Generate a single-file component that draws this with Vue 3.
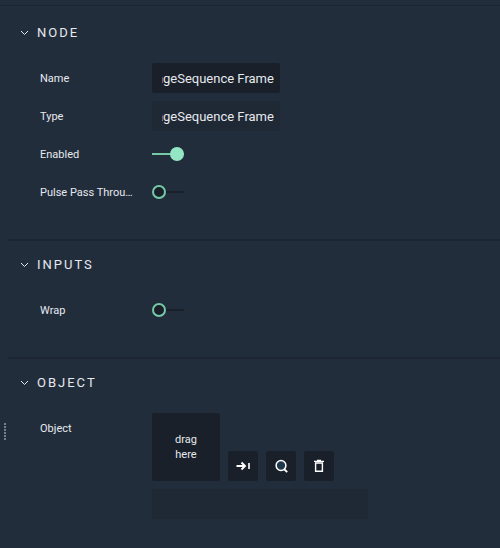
<script setup>
import { onMounted, ref } from 'vue'

const name = ref('ImageSequence Frame')
const type = ref('ImageSequence Frame')
const enabled = ref(true)
const pulse = ref(false)
const wrap = ref(false)
const objectPath = ref('')
const open = ref({ node: true, inputs: true, object: true })

const nameField = ref(null)
const typeField = ref(null)

// Long values show their end, the part that tells nodes apart.
onMounted(() => {
  for (const field of [nameField.value, typeField.value]) {
    field.scrollLeft = field.scrollWidth
  }
})
</script>

<template>
  <div class="editor">
    <div class="grip" aria-hidden="true">
      <i v-for="n in 6" :key="n"></i>
    </div>

    <main class="panel">
      <section class="group">
        <h2>
          <button class="heading" :aria-expanded="open.node" @click="open.node = !open.node">
            <svg class="chevron" viewBox="0 0 9 6"><path d="M1 1l3.5 3.5L8 1" /></svg>
            <span>NODE</span>
          </button>
        </h2>
        <div v-show="open.node" class="rows">
          <div class="row">
            <label class="label" for="name">Name</label>
            <input id="name" ref="nameField" v-model="name" class="text" type="text" />
          </div>
          <div class="row">
            <label class="label" for="type">Type</label>
            <input id="type" ref="typeField" v-model="type" class="text muted" type="text" readonly />
          </div>
          <div class="row">
            <label class="label" for="enabled">Enabled</label>
            <input id="enabled" v-model="enabled" class="switch" type="checkbox" />
          </div>
          <div class="row">
            <label class="label" for="pulse">Pulse Pass Through</label>
            <input id="pulse" v-model="pulse" class="switch" type="checkbox" />
          </div>
        </div>
      </section>

      <section class="group">
        <h2>
          <button class="heading" :aria-expanded="open.inputs" @click="open.inputs = !open.inputs">
            <svg class="chevron" viewBox="0 0 9 6"><path d="M1 1l3.5 3.5L8 1" /></svg>
            <span>INPUTS</span>
          </button>
        </h2>
        <div v-show="open.inputs" class="rows">
          <div class="row">
            <label class="label" for="wrap">Wrap</label>
            <input id="wrap" v-model="wrap" class="switch" type="checkbox" />
          </div>
        </div>
      </section>

      <section class="group">
        <h2>
          <button class="heading" :aria-expanded="open.object" @click="open.object = !open.object">
            <svg class="chevron" viewBox="0 0 9 6"><path d="M1 1l3.5 3.5L8 1" /></svg>
            <span>OBJECT</span>
          </button>
        </h2>
        <div v-show="open.object" class="rows">
          <div class="row">
            <label class="label" for="object">Object</label>
            <div class="picker">
              <div class="tools">
                <div class="drop">drag here</div>
                <button class="tool" aria-label="Go to object">
                  <svg viewBox="0 0 16 16">
                    <path d="M1.5 8h8.5M6.5 4.5L10 8l-3.5 3.5" stroke-width="1.9" />
                    <path d="M14 5v6" stroke-width="1.6" />
                  </svg>
                </button>
                <button class="tool" aria-label="Find object">
                  <svg viewBox="0 0 16 16">
                    <circle cx="8" cy="7.5" r="4.9" fill="#20384b" stroke-width="1.5" />
                    <path d="M11 11l3.2 3.2" stroke-width="1.8" />
                  </svg>
                </button>
                <button class="tool" aria-label="Remove object">
                  <svg viewBox="0 0 16 16">
                    <path d="M3 3.3h10M6 2.3h4" stroke-width="1.3" />
                    <path d="M4.6 5h6.8v8.3h-6.8z" stroke-width="1.4" />
                  </svg>
                </button>
              </div>
              <input id="object" v-model="objectPath" class="text muted path" type="text" readonly />
            </div>
          </div>
        </div>
      </section>
    </main>
  </div>
</template>

<style>
body {
  background: #222d3c;
}
</style>

<style scoped>
*,
*::before {
  box-sizing: border-box;
}

.editor {
  position: relative;
  min-height: 100vh;
  padding: 5px 0 0 8px;
  background: #222d3c;
  color: #e6e9ee;
  font-family: Roboto, "Liberation Sans", sans-serif;
  font-size: 11px;
  line-height: 16px;
}

.grip {
  position: absolute;
  left: 4px;
  top: 423px;
  display: grid;
  gap: 1px;
}

.grip i {
  width: 2px;
  height: 2px;
  background: #75808c;
}

.group {
  padding-bottom: 32px;
  border-top: 2px solid #1c2531;
}

.group:first-child {
  margin-left: -8px;
  padding-top: 3px;
  padding-left: 8px;
  border-top-width: 1px;
}

h2 {
  margin: 0 0 8px;
}

.heading {
  display: flex;
  align-items: center;
  gap: 8px;
  width: 100%;
  height: 46px;
  padding: 2px 12px 0;
  border: 0;
  background: none;
  color: inherit;
  font: 400 13px/16px Roboto, "Liberation Sans", sans-serif;
  letter-spacing: 2px;
  text-align: left;
}

.chevron {
  width: 9px;
  height: 6px;
  fill: none;
  stroke: currentColor;
  stroke-width: 1;
}

.rows {
  display: grid;
  gap: 8px;
  padding-left: 32px;
}

.row {
  display: grid;
  grid-template-columns: 96px minmax(0, 1fr);
  column-gap: 16px;
  align-items: start;
}

.label {
  padding: 8px 0 6px;
  overflow: hidden;
  white-space: nowrap;
  text-overflow: ellipsis;
}

.text {
  width: 128px;
  height: 30px;
  padding: 0 6px 0 10px;
  border: 0;
  border-radius: 2px;
  outline: 0;
  background: #19202a;
  color: inherit;
  font: 400 13px/16px Roboto, "Liberation Sans", sans-serif;
}

.muted {
  background: #1f2835;
}

.switch {
  appearance: none;
  display: flex;
  align-items: center;
  width: 32px;
  height: 30px;
  margin: 0;
  background: linear-gradient(#19202a, #19202a) center / 100% 2px no-repeat;
}

.switch::before {
  content: "";
  width: 14px;
  height: 14px;
  border: 2px solid #75c9a6;
  border-radius: 50%;
  background: #19202a;
}

.switch:checked {
  justify-content: flex-end;
  background-image: linear-gradient(#75c9a6, #75c9a6);
}

.switch:checked::before {
  border-color: #94e5c3;
  background: #94e5c3;
}

.picker {
  display: grid;
  gap: 8px;
}

.tools {
  display: flex;
  align-items: flex-end;
  gap: 8px;
}

.drop {
  display: grid;
  place-items: center;
  width: 68px;
  height: 68px;
  padding: 0 20px;
  border-radius: 2px;
  background: #19202a;
  line-height: 15px;
  text-align: center;
}

.tool {
  display: grid;
  place-items: center;
  width: 30px;
  height: 30px;
  padding: 0;
  border: 0;
  border-radius: 2px;
  background: #19202a;
  color: #fff;
}

.tool svg {
  width: 16px;
  height: 16px;
  fill: none;
  stroke: currentColor;
}

.path {
  width: 216px;
  max-width: 100%;
}
</style>
